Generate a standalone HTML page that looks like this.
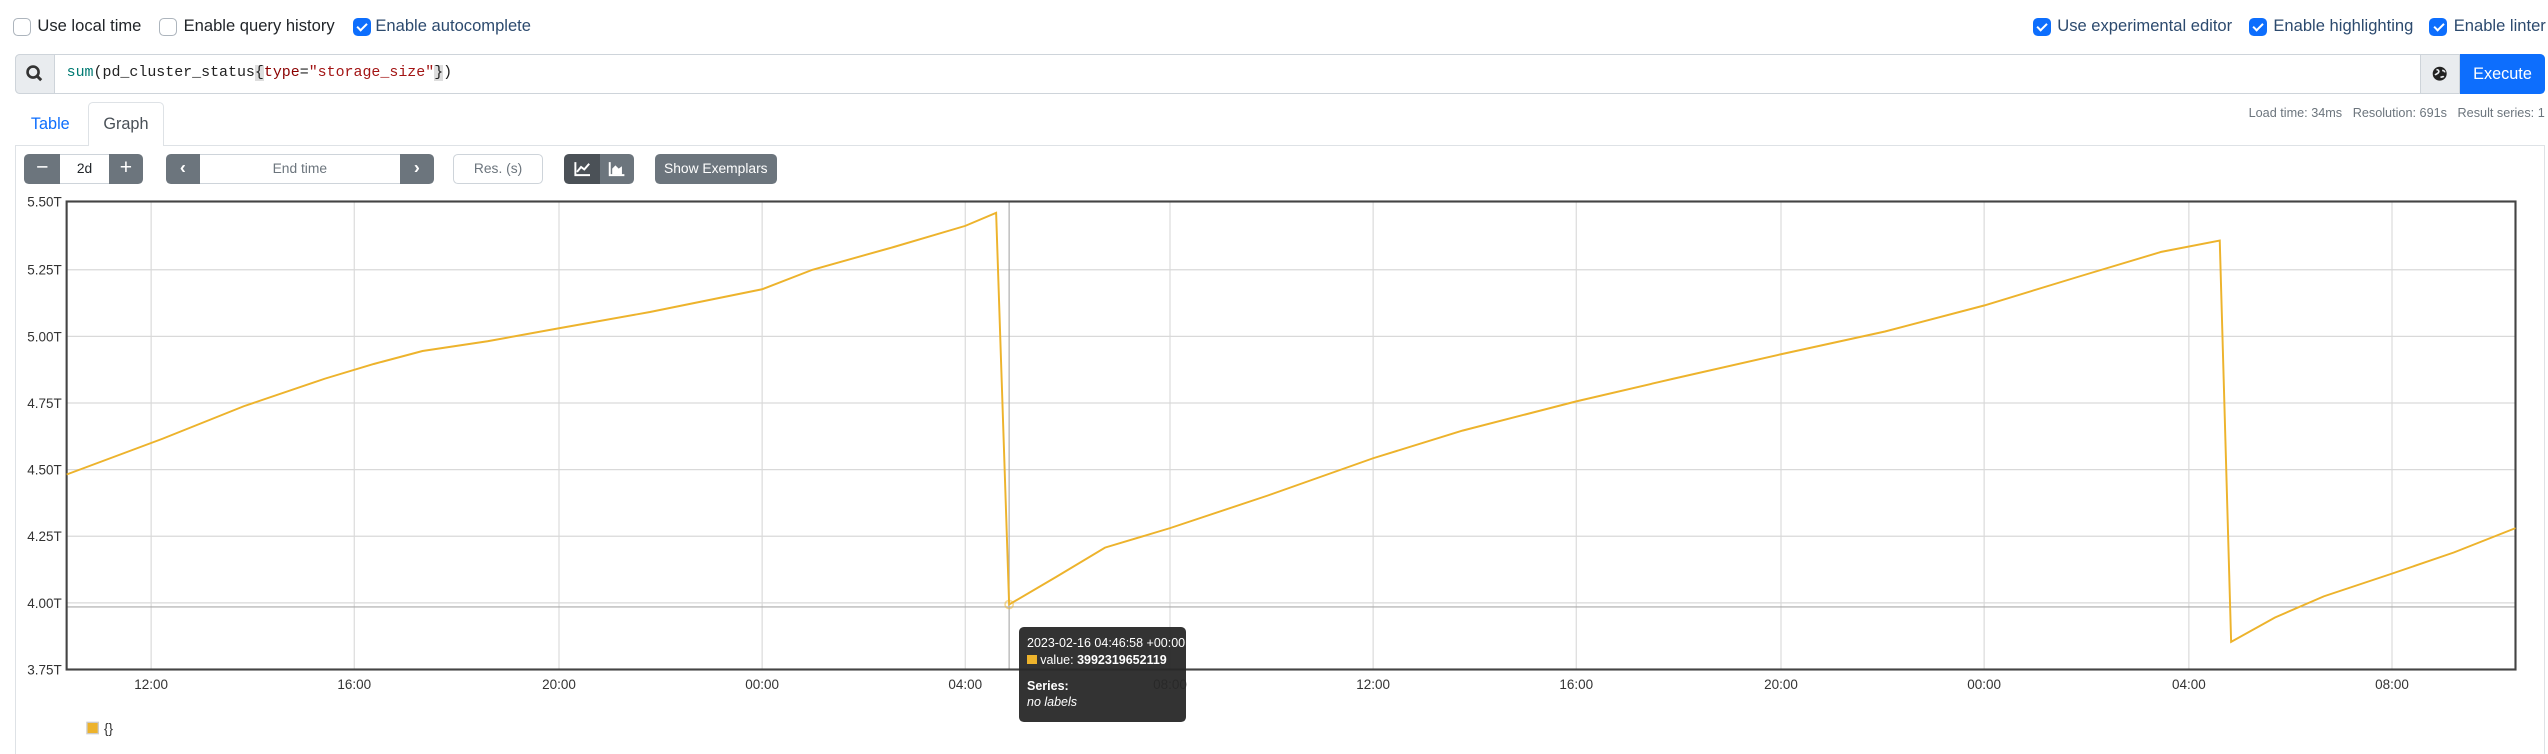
<!DOCTYPE html>
<html><head><meta charset="utf-8"><style>
html,body{margin:0;padding:0;background:#fff;overflow:hidden;width:2548px;height:754px}
#root{zoom:1.625;width:1568px;height:464px;position:relative;font-family:"Liberation Sans",Arial,sans-serif;color:#212529}
.a{position:absolute;white-space:nowrap}
.cb{position:absolute;width:11px;height:11px;border:1px solid #adb5bd;border-radius:3px;background:#fff;box-sizing:border-box}
.cb.on{background:#0d6efd;border-color:#0d6efd}
.cb.on:after{content:"";position:absolute;left:3.3px;top:1.3px;width:2.5px;height:5px;border:solid #fff;border-width:0 1.4px 1.4px 0;transform:rotate(45deg)}
.lbl{font-size:10.2px;top:10px}
.btn{position:absolute;background:#6c757d;color:#fff;font-size:8.5px;text-align:center;box-sizing:border-box}
</style></head><body><div id="root">
<div class="cb" style="left:8px;top:11px"></div><div class="a lbl" style="left:23px">Use local time</div>
<div class="cb" style="left:98px;top:11px"></div><div class="a lbl" style="left:113px">Enable query history</div>
<div class="cb on" style="left:217px;top:11px"></div><div class="a lbl" style="left:231px;color:#2c4a6e">Enable autocomplete</div>
<div class="cb on" style="left:1251px;top:11px"></div><div class="a lbl" style="left:1266px;color:#2c4a6e">Use experimental editor</div>
<div class="cb on" style="left:1384px;top:11px"></div><div class="a lbl" style="left:1399px;color:#2c4a6e">Enable highlighting</div>
<div class="cb on" style="left:1495px;top:11px"></div><div class="a lbl" style="left:1510px;color:#2c4a6e">Enable linter</div>

<div class="a" style="left:9px;top:33px;width:1557px;height:25px;border:1px solid #ced4da;border-radius:3px;box-sizing:border-box"></div>
<div class="a" style="left:9px;top:33px;width:25px;height:25px;background:#e9ecef;border:1px solid #ced4da;border-radius:3px 0 0 3px;box-sizing:border-box">
<svg width="23" height="23" viewBox="0 0 23 23" style="position:absolute;left:0;top:0"><circle cx="10.5" cy="10.5" r="3.4" fill="none" stroke="#333" stroke-width="1.6"/><line x1="13" y1="13" x2="15.5" y2="15.5" stroke="#333" stroke-width="1.8"/></svg></div>
<div class="a" style="left:41px;top:40px;font-family:'Liberation Mono',monospace;font-size:9.2px;color:#222"><span style="color:#007a72">sum</span>(pd_cluster_status<span style="background:#ddd">{</span><span style="color:#8b0000">type</span>=<span style="color:#a31515">"storage_size"</span><span style="background:#ddd">}</span>)</div>
<div class="a" style="left:1489px;top:33px;width:25px;height:25px;background:#e9ecef;border:1px solid #ced4da;box-sizing:border-box">
<svg width="23" height="23" viewBox="0 0 23 23"><circle cx="11.5" cy="11.5" r="4.3" fill="#222"/><path d="M9.5 9c1.3 0 1.7.8 1.3 1.7s-1.7.9-2.1 1.7M13 9.5c.8 0 1.6.4 1.6 1.2M12 13.8c.8-.4 1.6-.2 2-.8" stroke="#e9ecef" stroke-width="1" fill="none"/></svg></div>
<div class="a" style="left:1514px;top:33px;width:52px;height:25px;background:#0d6efd;border-radius:0 3px 3px 0;color:#fff;font-size:10px;text-align:center;line-height:25px">Execute</div>
<div class="a" style="right:2px;top:65px;font-size:7.8px;color:#6c757d">Load time: 34ms &nbsp;&nbsp;Resolution: 691s &nbsp;&nbsp;Result series: 1</div>

<div class="a" style="left:19px;top:71px;font-size:10px;color:#0d6efd">Table</div>
<div class="a" style="left:9px;top:89px;width:1557px;height:380px;border:1px solid #dee2e6;box-sizing:border-box"></div>
<div class="a" style="left:54px;top:63px;width:47px;height:27px;border:1px solid #dee2e6;border-bottom:none;background:#fff;border-radius:3px 3px 0 0;box-sizing:border-box;font-size:10px;text-align:center;line-height:26px;color:#495057">Graph</div>

<div class="btn" style="left:15px;top:95px;width:22px;height:18px;border-radius:3px 0 0 3px;font-size:13px;line-height:17px">&minus;</div>
<div class="a" style="left:37px;top:95px;width:30px;height:18px;border-top:1px solid #ced4da;border-bottom:1px solid #ced4da;box-sizing:border-box;font-size:8.5px;text-align:center;line-height:16px">2d</div>
<div class="btn" style="left:67px;top:95px;width:21px;height:18px;border-radius:0 3px 3px 0;font-size:13px;line-height:17px">+</div>
<div class="btn" style="left:102px;top:95px;width:21px;height:18px;border-radius:3px 0 0 3px;font-size:11px;line-height:17px;font-weight:bold">&lsaquo;</div>
<div class="a" style="left:123px;top:95px;width:123px;height:18px;border-top:1px solid #ced4da;border-bottom:1px solid #ced4da;box-sizing:border-box;font-size:8.5px;text-align:center;line-height:16px;color:#6c757d">End time</div>
<div class="btn" style="left:246px;top:95px;width:21px;height:18px;border-radius:0 3px 3px 0;font-size:11px;line-height:17px;font-weight:bold">&rsaquo;</div>
<div class="a" style="left:279px;top:95px;width:55px;height:18px;border:1px solid #ced4da;border-radius:3px;box-sizing:border-box;font-size:8.5px;text-align:center;line-height:16px;color:#6c757d">Res. (s)</div>
<div class="btn" style="left:347px;top:95px;width:22px;height:18px;background:#4b5157;border-radius:3px 0 0 3px"><svg width="22" height="18"><path d="M7 5v8h9M8 11l2.5-3 2 1.5 3-3.5" stroke="#fff" stroke-width="1.2" fill="none"/></svg></div>
<div class="btn" style="left:369px;top:95px;width:21px;height:18px;border-radius:0 3px 3px 0"><svg width="21" height="18"><path d="M6 5v8h9" stroke="#fff" stroke-width="1.2" fill="none"/><path d="M7.5 12.5V9l2-2 2 2 2-1.5v5z" fill="#fff"/></svg></div>
<div class="btn" style="left:403px;top:95px;width:75px;height:18px;border-radius:3px;line-height:18px">Show Exemplars</div>

<svg class="a" style="left:0;top:0" width="1568" height="464" font-family="Liberation Sans,Arial,sans-serif" font-size="8.3" fill="#333">
<g stroke="#d9d9d9" stroke-width="0.7">
<line x1="41" x2="1548" y1="166" y2="166"/><line x1="41" x2="1548" y1="207" y2="207"/><line x1="41" x2="1548" y1="248" y2="248"/><line x1="41" x2="1548" y1="289" y2="289"/><line x1="41" x2="1548" y1="330" y2="330"/><line x1="41" x2="1548" y1="371" y2="371"/>
<line y1="124" y2="412" x1="93" x2="93"/><line y1="124" y2="412" x1="218" x2="218"/><line y1="124" y2="412" x1="344" x2="344"/><line y1="124" y2="412" x1="469" x2="469"/><line y1="124" y2="412" x1="594" x2="594"/><line y1="124" y2="412" x1="720" x2="720"/><line y1="124" y2="412" x1="845" x2="845"/><line y1="124" y2="412" x1="970" x2="970"/><line y1="124" y2="412" x1="1096" x2="1096"/><line y1="124" y2="412" x1="1221" x2="1221"/><line y1="124" y2="412" x1="1347" x2="1347"/><line y1="124" y2="412" x1="1472" x2="1472"/>
</g>
<line x1="621" x2="621" y1="124" y2="412" stroke="#aaa" stroke-width="0.7"/>
<line x1="41" x2="1548" y1="373.5" y2="373.5" stroke="#aaa" stroke-width="0.7"/>
<rect x="41" y="124" width="1507" height="288" fill="none" stroke="#444" stroke-width="1.3"/>
<g text-anchor="end"><text x="38" y="127">5.50T</text><text x="38" y="169">5.25T</text><text x="38" y="210">5.00T</text><text x="38" y="251">4.75T</text><text x="38" y="292">4.50T</text><text x="38" y="333">4.25T</text><text x="38" y="374">4.00T</text><text x="38" y="415">3.75T</text></g>
<g text-anchor="middle"><text x="93" y="424">12:00</text><text x="218" y="424">16:00</text><text x="344" y="424">20:00</text><text x="469" y="424">00:00</text><text x="594" y="424">04:00</text><text x="720" y="424">08:00</text><text x="845" y="424">12:00</text><text x="970" y="424">16:00</text><text x="1096" y="424">20:00</text><text x="1221" y="424">00:00</text><text x="1347" y="424">04:00</text><text x="1472" y="424">08:00</text></g>
<polyline fill="none" stroke="#edb32c" stroke-width="1.2" points="41,292 100,270 150,250 200,233 230,224 260,216 300,210 344,202 400,192 469,178 500,166 550,152 594,139 613,131 621,372 650,355 680,337 720,325 780,305 845,282 900,265 970,247 1030,233 1096,218 1160,204 1221,188 1280,170 1330,155 1366,148 1373,395 1400,380 1430,367 1472,353 1510,340 1548,325"/>
<circle cx="621" cy="372" r="2.5" fill="none" stroke="#edb32c" stroke-opacity="0.5"/>
<rect x="53.5" y="444.5" width="7" height="7" fill="#edb32c" stroke="#ccc" stroke-width="0.8"/>
<text x="64" y="451">{}</text>
</svg>

<div class="a" style="left:627px;top:386px;width:103px;height:58px;background:rgba(40,40,40,0.95);border-radius:3px;color:#fff;font-size:7.7px;line-height:10px;padding:5px 0 0 5px;box-sizing:border-box">
2023-02-16 04:46:58 +00:00<br><span style="display:inline-block;width:6px;height:6px;background:#edb32c;vertical-align:-0.5px"></span> value: <b>3992319652119</b><br><div style="height:6px"></div><b>Series:</b><br><i>no labels</i></div>
</div></body></html>
